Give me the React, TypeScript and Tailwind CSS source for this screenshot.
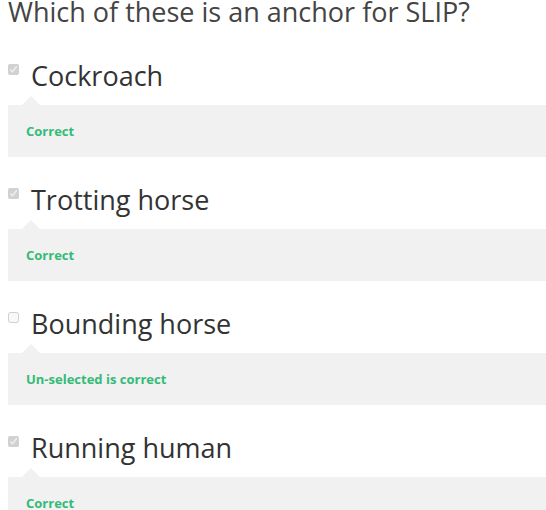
import React from 'react';

const items = [
  { label: 'Cockroach', checked: true, feedback: 'Correct' },
  { label: 'Trotting horse', checked: true, feedback: 'Correct' },
  { label: 'Bounding horse', checked: false, feedback: 'Un-selected is correct' },
  { label: 'Running human', checked: true, feedback: 'Correct' },
];

const App = () => {
  return (
    <div className="h-[510px] overflow-hidden bg-white pl-2 font-['Open_Sans',sans-serif]">
      <h1 className="text-[27px] leading-[23px] text-[#444] font-normal">Which of these is an anchor for SLIP?</h1>
      <div className="mt-[33px] flex flex-col">
        {items.map((item) => (
          <div key={item.label} className="pb-[23px]">
            <label className="flex items-start">
              <input
                type="checkbox"
                checked={item.checked}
                disabled
                readOnly
                className="mt-[8px] h-[11px] w-[11px] shrink-0"
              />
              <span className="ml-3 pt-[2px] text-[27px] leading-[36px] text-[#333]">{item.label}</span>
            </label>
            <div className="relative mt-[11px] bg-[#f1f1f1] px-[18px] py-4">
              <span className="absolute left-[14px] top-[-9px] h-0 w-0 border-x-[9px] border-b-[9px] border-x-transparent border-b-[#f1f1f1]" />
              <p className="text-[13px] leading-5 font-bold text-[#33bb77]">{item.feedback}</p>
            </div>
          </div>
        ))}
      </div>
    </div>
  );
};

export default App;
